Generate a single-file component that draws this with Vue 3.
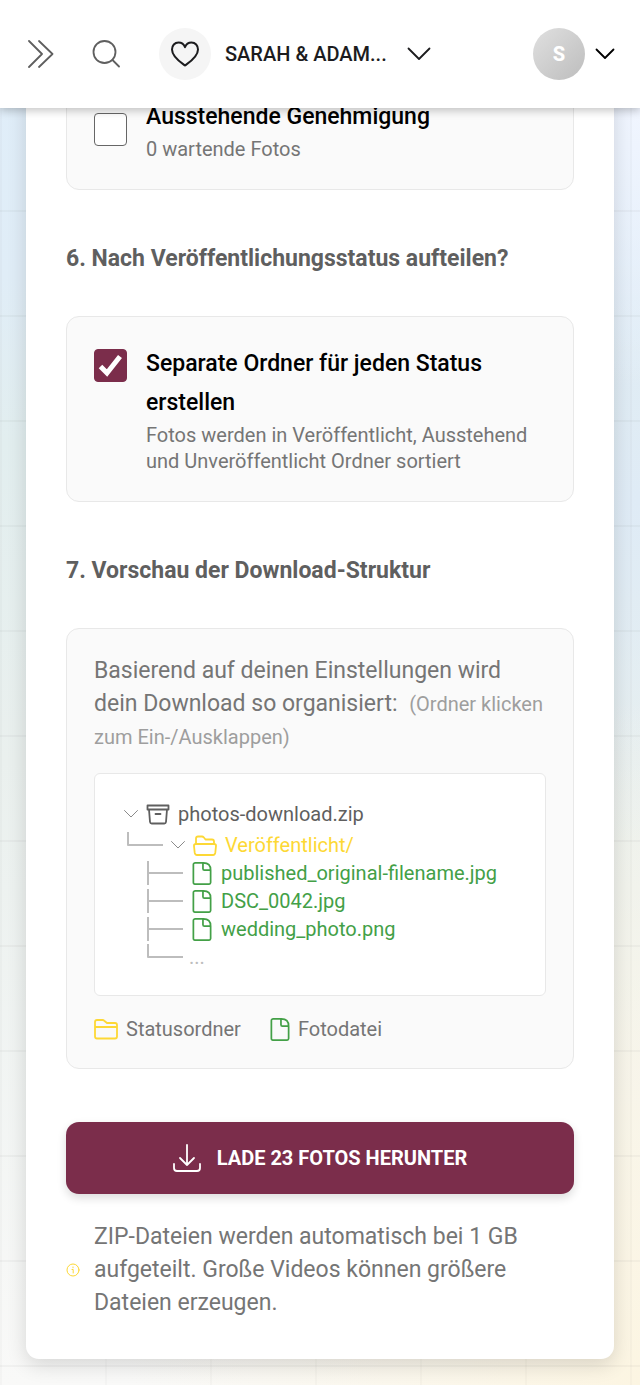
<template>
  <div class="page">
    <header class="topbar">
      <button class="icon-btn" type="button" aria-label="Menü öffnen">
        <svg class="ico-26" viewBox="0 0 26 28">
          <path d="M1 1l13 13L1 27M11 1l13.500 13L11 27" />
        </svg>
      </button>
      <button class="icon-btn search" type="button" aria-label="Suchen">
        <svg class="ico-28" viewBox="0 0 28 28">
          <circle cx="12.500" cy="12" r="11" />
          <path d="M20.500 20l6.500 6.500" />
        </svg>
      </button>
      <button class="event" type="button">
        <span class="event-icon">
          <svg class="ico-28" viewBox="0 0 28 28">
            <path d="M14 25.500C10 22.500 1 17 1 9.500C1 5.500 3.700 2.500 7.500 2.500C10.500 2.500 13 4.500 14 7.200C15 4.500 17.500 2.500 20.500 2.500C24.300 2.500 27 5.500 27 9.500C27 17 18 22.500 14 25.500Z" />
          </svg>
        </span>
        <span class="event-name">SARAH &amp; ADAM...</span>
        <svg class="event-chevron" viewBox="0 0 24 14"><path d="M1.500 1.500L12 12 22.500 1.500" /></svg>
      </button>
      <button class="account" type="button" aria-label="Konto">
        <span class="avatar">S</span>
        <svg class="account-chevron" viewBox="0 0 20 12"><path d="M1.500 1.500L10 10 18.500 1.500" /></svg>
      </button>
    </header>

    <main class="card">
      <label class="panel option centered">
        <span class="check">
          <input v-model="pending" type="checkbox">
          <svg viewBox="0 0 33 33"><path d="M6.500 17.500L13 24 26 7.500" /></svg>
        </span>
        <span class="option-text">
          <span class="option-title">Ausstehende Genehmigung</span>
          <span class="option-hint">0 wartende Fotos</span>
        </span>
      </label>

      <h2>6. Nach Veröffentlichungsstatus aufteilen?</h2>
      <label class="panel option">
        <span class="check">
          <input v-model="separate" type="checkbox">
          <svg viewBox="0 0 33 33"><path d="M6.500 17.500L13 24 26 7.500" /></svg>
        </span>
        <span class="option-text">
          <span class="option-title">Separate Ordner für jeden Status erstellen</span>
          <span class="option-hint">Fotos werden in Veröffentlicht, Ausstehend und Unveröffentlicht Ordner sortiert</span>
        </span>
      </label>

      <h2>7. Vorschau der Download-Struktur</h2>
      <section class="panel preview">
        <p class="intro">
          Basierend auf deinen Einstellungen wird dein Download so organisiert:
          <small>(Ordner klicken zum Ein-/Ausklappen)</small>
        </p>

        <div class="tree">
          <button class="row root" type="button" @click="zipOpen = !zipOpen">
            <svg class="caret" :class="{ closed: !zipOpen }" viewBox="0 0 14 8"><path d="M.5.500L7 7 13.500.500" /></svg>
            <svg class="ico-24" viewBox="0 0 24 24">
              <path d="M1.500 3.500h21v4h-21zM3 7.500l1 12.500q.2 1.500 1.700 1.500h12.600q1.500 0 1.700-1.500L21 7.500M9.500 12h5" />
            </svg>
            <span>photos-download.zip</span>
          </button>
          <template v-if="zipOpen">
            <button class="row folder" type="button" @click="folderOpen = !folderOpen">
              <svg class="branch" viewBox="0 0 36 26"><path d="M1 0v13h35" /></svg>
              <svg class="caret" :class="{ closed: !folderOpen }" viewBox="0 0 14 8"><path d="M.5.500L7 7 13.500.500" /></svg>
              <svg class="ico-24" viewBox="0 0 24 24">
                <path d="M3 11V5.500q0-2 2-2h4q1 0 1.700.8L12.500 6.500H19q2 0 2 2V11M3 11h18q2.200 0 2 2l-.7 6.700q-.3 2.300-2.300 2.300H4q-2 0-2.300-2.300L1 13q-.2-2 2-2z" />
              </svg>
              <span>Veröffentlicht/</span>
            </button>
            <ul v-if="folderOpen">
              <li v-for="file in files" :key="file" class="row file">
                <svg class="branch" viewBox="0 0 36 26"><path d="M1 1v24M1 13h35" /></svg>
                <svg class="ico-file" viewBox="0 0 20 24">
                  <path d="M3 1h8.500Q19 1 19 8.500V21.500q0 1.500-1.500 1.500h-15Q1 23 1 21.500V2.500Q1 1 3 1zM11 1.500V7q0 1.500 1.500 1.500H19" />
                </svg>
                <span>{{ file }}</span>
              </li>
              <li class="row file more">
                <svg class="branch" viewBox="0 0 36 26"><path d="M1 0v13h35" /></svg>
                <span>...</span>
              </li>
            </ul>
          </template>
        </div>

        <div class="legend">
          <span class="legend-item status">
            <svg class="ico-24" viewBox="0 0 24 24">
              <path d="M1 18.500V5q0-2 2-2h5.500q1 0 1.700.7L13 6h8q2 0 2 2v11.500q0 2-2 2H3q-2 0-2-2zM1 10h22" />
            </svg>
            Statusordner
          </span>
          <span class="legend-item photo">
            <svg class="ico-file" viewBox="0 0 20 24">
              <path d="M3 1h8.500Q19 1 19 8.500V21.500q0 1.500-1.500 1.500h-15Q1 23 1 21.500V2.500Q1 1 3 1zM11 1.500V7q0 1.500 1.500 1.500H19" />
            </svg>
            Fotodatei
          </span>
        </div>
      </section>

      <button class="download" type="button">
        <svg class="ico-28" viewBox="0 0 28 28">
          <path d="M14 1v20M7 14l7 7 7-7M1 20v4q0 3 3 3h20q3 0 3-3v-4" />
        </svg>
        LADE 23 FOTOS HERUNTER
      </button>

      <div class="note">
        <svg class="ico-info" viewBox="0 0 14 14">
          <circle cx="7" cy="7" r="6" />
          <path d="M6 6.500h1.200V10M7 4v.8" />
        </svg>
        <p>ZIP-Dateien werden automatisch bei 1 GB aufgeteilt. Große Videos können größere Dateien erzeugen.</p>
      </div>
    </main>
  </div>
</template>

<script setup>
import { ref } from 'vue';

const pending = ref(false);
const separate = ref(true);
const zipOpen = ref(true);
const folderOpen = ref(true);

const files = ['published_original-filename.jpg', 'DSC_0042.jpg', 'wedding_photo.png'];
</script>

<style>
body {
  margin: 0;
}
</style>

<style scoped>
.page {
  min-height: 100vh;
  box-sizing: border-box;
  padding-bottom: 26px;
  font-family: Roboto, "Liberation Sans", sans-serif;
  color: #757575;
  background-image:
    linear-gradient(rgba(0, 0, 0, 0.03) 2px, transparent 2px),
    linear-gradient(90deg, rgba(0, 0, 0, 0.02) 2px, transparent 2px),
    radial-gradient(ellipse 80% 50% at 100% 100%, #fcf5e2, transparent),
    radial-gradient(ellipse 60% 20% at 100% 8%, #f0f5ff, transparent),
    radial-gradient(ellipse 50% 25% at 100% 36%, #dfebf6, transparent),
    linear-gradient(#e0eefa, #e0edf7 20%, #e2eeef 32%, #eaf0ee 55%, #f9f9f8);
  background-size: 105px 105px, 105px 105px, 100% 100%, 100% 100%, 100% 100%, 100% 100%;
}

button {
  font: inherit;
  color: inherit;
  border: 0;
  background: none;
  padding: 0;
  cursor: pointer;
}

svg {
  display: block;
  flex: none;
  fill: none;
  stroke: currentColor;
  stroke-width: 1.8;
  stroke-linecap: round;
  stroke-linejoin: round;
}

.topbar {
  position: sticky;
  top: 0;
  z-index: 2;
  display: flex;
  align-items: center;
  height: 108px;
  box-sizing: border-box;
  padding: 0 25px 0 28px;
  background: #fff;
  box-shadow: 0 3px 8px rgba(0, 0, 0, 0.22);
}

.icon-btn {
  color: #5f5f5f;
}

.search {
  margin: 0 39px 0 38px;
}

.ico-26 {
  width: 26px;
  height: 28px;
}

.ico-28 {
  width: 28px;
  height: 28px;
}

.ico-24 {
  width: 24px;
  height: 24px;
}

.ico-file {
  width: 20px;
  height: 23px;
}

.ico-info {
  width: 14px;
  height: 14px;
  stroke-width: 1;
  color: #fdd835;
}

.event {
  display: flex;
  align-items: center;
  color: #1c1c1e;
}

.event .ico-28 {
  stroke-width: 2;
}

.event-icon {
  display: grid;
  place-items: center;
  width: 52px;
  height: 52px;
  border-radius: 50%;
  background: #f5f5f5;
}

.event-name {
  margin: 0 20px 0 14px;
  font-size: 20px;
  font-weight: 500;
}

.event-chevron {
  width: 24px;
  height: 14px;
}

.account {
  display: flex;
  align-items: center;
  gap: 10px;
  margin-left: auto;
  color: #000;
}

.avatar {
  display: grid;
  place-items: center;
  width: 52px;
  height: 52px;
  border-radius: 50%;
  background: linear-gradient(135deg, #e0e0e0, #bdbdbd);
  color: #fff;
  font-size: 20px;
  font-weight: 800;
}

.account-chevron {
  width: 20px;
  height: 12px;
}

.card {
  margin: -39px 26px 0;
  padding: 0 40px 40px;
  background: #fff;
  border-radius: 0 0 13px 13px;
  box-shadow: 0 6px 20px rgba(0, 0, 0, 0.14);
}

.panel {
  box-sizing: border-box;
  padding: 27px;
  border: 1px solid #e8e8e8;
  border-radius: 13px;
  background: #fafafa;
}

.option {
  display: flex;
  gap: 19px;
  cursor: pointer;
}

.check {
  display: grid;
  flex: none;
  width: 33px;
  height: 33px;
  margin-top: 5px;
}

.centered {
  align-items: center;
}

.centered .check {
  margin-top: 0;
}

.check > * {
  grid-area: 1 / 1;
}

.check input {
  appearance: none;
  width: 33px;
  height: 33px;
  margin: 0;
  border: 1px solid #666;
  border-radius: 4px;
  background: #fff;
}

.check input:checked {
  border-color: #7b2d4b;
  background: #7b2d4b;
}

.check svg {
  visibility: hidden;
  pointer-events: none;
  color: #fff;
  stroke-width: 5;
  stroke-linecap: butt;
  stroke-linejoin: miter;
}

.check input:checked + svg {
  visibility: visible;
}

.option-title {
  display: block;
  font-size: 23px;
  font-weight: 500;
  line-height: 39px;
  color: #000;
}

.option-hint {
  display: block;
  font-size: 20px;
  line-height: 26px;
}

h2 {
  margin: 54px 0 42px;
  font-size: 23px;
  font-weight: 700;
  line-height: 30px;
  color: #5f5f5f;
}

.preview {
  padding: 25px 27px 26px;
}

.intro {
  margin: 0 0 20px;
  font-size: 23px;
  line-height: 33px;
}

.intro small {
  margin-left: 6px;
  font-size: 20px;
  line-height: 26px;
  color: #9e9e9e;
}

.tree {
  padding: 23px 29px 24px;
  border: 1px solid #e8e8e8;
  border-radius: 6px;
  background: #fff;
  font-size: 20px;
}

.tree ul {
  margin: 0;
  padding: 0;
  list-style: none;
}

.row {
  display: flex;
  align-items: center;
  gap: 8px;
}

.root {
  height: 33px;
  color: #5f5f5f;
}

.folder {
  height: 29px;
  padding-left: 3px;
  color: #fdd835;
}

.file {
  gap: 9px;
  height: 28px;
  padding-left: 23px;
  color: #43a047;
}

.more {
  gap: 6px;
  color: #bdbdbd;
}

.caret {
  width: 14px;
  height: 8px;
  stroke-width: 1;
  color: #8a8a8a;
}

.caret.closed {
  transform: rotate(-90deg);
}

.branch {
  width: 36px;
  height: 26px;
  color: #bdbdbd;
  stroke-width: 2;
  stroke-linecap: butt;
}

.legend {
  display: flex;
  gap: 29px;
  margin-top: 20px;
  font-size: 20px;
  line-height: 26px;
}

.legend-item {
  display: flex;
  align-items: center;
  gap: 8px;
}

.status svg {
  color: #fdd835;
}

.photo svg {
  color: #43a047;
}

.download {
  display: flex;
  align-items: center;
  justify-content: center;
  gap: 16px;
  width: 100%;
  height: 72px;
  margin: 53px 0 26px;
  border-radius: 13px;
  background: #7b2d4b;
  color: #fff;
  font-size: 20px;
  font-weight: 700;
  box-shadow: 0 4px 10px rgba(0, 0, 0, 0.14);
}

.note {
  display: flex;
  align-items: center;
  gap: 14px;
  font-size: 23px;
  line-height: 33px;
}

.note p {
  margin: 0;
}
</style>
